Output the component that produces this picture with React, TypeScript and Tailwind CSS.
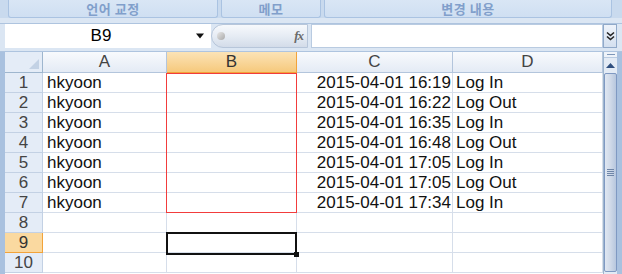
import { ReactNode } from 'react';

const rows = [
  ['hkyoon', '2015-04-01 16:19', 'Log In'],
  ['hkyoon', '2015-04-01 16:22', 'Log Out'],
  ['hkyoon', '2015-04-01 16:35', 'Log In'],
  ['hkyoon', '2015-04-01 16:48', 'Log Out'],
  ['hkyoon', '2015-04-01 17:05', 'Log In'],
  ['hkyoon', '2015-04-01 17:05', 'Log Out'],
  ['hkyoon', '2015-04-01 17:34', 'Log In'],
  ['', '', ''],
  ['', '', ''],
  ['', '', ''],
];

const groups = [
  { label: '언어 교정', w: 'w-[210px]' },
  { label: '메모', w: 'w-[100px]' },
  { label: '변경 내용', w: 'w-[288px]' },
];

function ColHead({ children, active }: { children: ReactNode; active?: boolean }) {
  return (
    <div
      className={
        active
          ? 'h-[21px] flex items-center justify-center bg-gradient-to-b from-[#fbe3b6] to-[#f6c97c] border-r border-b border-[#f2a33a] text-[#333]'
          : 'h-[21px] flex items-center justify-center bg-gradient-to-b from-[#f8fafd] to-[#e4ebf5] border-r border-b border-[#b3c5dc] text-[#444]'
      }
    >
      {children}
    </div>
  );
}

function RowHead({ n, active }: { n: number; active?: boolean }) {
  return (
    <div
      className={
        active
          ? 'h-[20px] flex items-center justify-center bg-[#fad9a0] border-r border-b border-[#f2a33a] text-[#333]'
          : 'h-[20px] flex items-center justify-center bg-[#e4ecf7] border-r border-b border-[#c3d1e4] text-[#444]'
      }
    >
      {n}
    </div>
  );
}

export default function App() {
  return (
    <div className="w-[622px] h-[274px] overflow-hidden bg-[#c9daee] flex flex-col font-['Liberation_Sans',Arial,sans-serif] text-[17px]">
      {/* ribbon group labels */}
      <div className="h-[18px] flex gap-[3px] pl-[8px] shrink-0">
        {groups.map((g) => (
          <div
            key={g.label}
            className={`${g.w} h-[18px] rounded-b-[3px] border border-t-0 border-[#aac3e2] bg-gradient-to-b from-[#d9e6f5] to-[#cfdff2] flex items-center justify-center text-[13px] font-bold text-[#819fcb] tracking-[0.5px] font-['Noto_Sans_CJK_KR',sans-serif]`}
          >
            {g.label}
          </div>
        ))}
      </div>
      <div className="h-[6px] shrink-0 bg-[#dbe6f3] border-b border-[#aec4df]" />

      {/* formula bar */}
      <div className="h-[24px] shrink-0 flex pl-[5px] pr-[5px] bg-[#dbe6f3]">
        <div className="w-[206px] bg-white flex items-center">
          <span className="flex-1 text-center pl-[1px] text-black">B9</span>
          <svg width="9" height="6" viewBox="0 0 9 6" className="mr-[6px]">
            <path d="M0 0.5h8L4 5.5z" fill="#111" />
          </svg>
        </div>
        <div className="w-[97px] rounded-l-full border border-[#b7c6da] bg-gradient-to-b from-[#f7f9fc] via-[#e6ecf4] to-[#d3dce9] flex items-center justify-between pl-[5px] pr-[4px]">
          <span className="w-[8px] h-[8px] rounded-full bg-gradient-to-br from-[#e8e8e8] to-[#a9a9a9]" />
          <span className="font-['Liberation_Serif',serif] italic font-bold text-[13px] text-[#6a6a6a] tracking-[-1px]">fx</span>
        </div>
        <div className="w-[3px] bg-[#dbe6f3]" />
        <div className="flex-1 bg-white border border-[#b9cbe1]" />
        <div className="w-[14px] border border-[#90a9c9] bg-gradient-to-b from-[#eef3fa] to-[#d4e0ef] flex items-center justify-center">
          <svg width="9" height="10" viewBox="0 0 9 10">
            <path d="M1 1.5l3.5 3 3.5-3M1 5.5l3.5 3 3.5-3" stroke="#222" strokeWidth="1.6" fill="none" />
          </svg>
        </div>
      </div>
      <div className="h-[4px] shrink-0 bg-[#dbe6f3] border-b border-[#aec4df]" />

      {/* sheet */}
      <div className="flex-1 flex pl-[5px] pr-[5px] bg-[#a9c1df]">
        <div className="relative grid grid-cols-[38px_124px_130px_156px_150px] content-start bg-white">
          <div className="h-[21px] bg-[#e4ecf7] border-r border-b border-[#9eb6ce] flex items-end justify-end pr-[3px] pb-[3px]">
            <svg width="10" height="10" viewBox="0 0 10 10">
              <path d="M10 0V10H0z" fill="#c3d2e5" />
            </svg>
          </div>
          <ColHead>A</ColHead>
          <ColHead active>B</ColHead>
          <ColHead>C</ColHead>
          <ColHead>D</ColHead>
          {rows.map((r, i) => (
            <div key={i} className="contents">
              <RowHead n={i + 1} active={i === 8} />
              <div className="h-[20px] flex items-center pl-[4px] border-r border-b border-[#d6deea] text-[#111]">{r[0]}</div>
              <div className="h-[20px] border-r border-b border-[#d6deea]" />
              <div className="h-[20px] flex items-center justify-end pr-[1px] border-r border-b border-[#d6deea] text-[#111]">{r[1]}</div>
              <div className="h-[20px] flex items-center pl-[3px] border-r border-b border-[#d6deea] text-[#111]">{r[2]}</div>
            </div>
          ))}
          {/* red box around B1:B7 */}
          <div className="absolute left-[161px] top-[21px] w-[131px] h-[140px] border border-[#f23c3c]" />
          {/* active cell B9 */}
          <div className="absolute left-[161px] top-[180px] w-[131px] h-[23px] border-2 border-[#111]">
            <div className="absolute -right-[4px] -bottom-[4px] w-[5px] h-[5px] bg-[#111]" />
          </div>
        </div>

        {/* vertical scrollbar */}
        <div className="w-[14px] flex flex-col bg-[#e3ebf5] border-l border-[#9eb6ce]">
          <div className="h-[6px] flex items-center justify-center bg-[#eef3f9] border-b border-[#b9cbe1]">
            <div className="w-[8px] h-[1px] bg-[#7d96b8]" />
          </div>
          <div className="h-[15px] flex items-center justify-center">
            <svg width="9" height="5" viewBox="0 0 9 5">
              <path d="M0 5L4.5 0 9 5z" fill="#2f4f7f" />
            </svg>
          </div>
          <div className="flex-1 mb-[2px] rounded-[2px] border border-[#7f99c2] bg-gradient-to-r from-[#dfe7f2] via-[#cfd9e8] to-[#b7c7de] flex items-center justify-center">
            <div className="flex flex-col gap-[1px]">
              <div className="w-[7px] h-[1px] bg-[#6f86a8]" />
              <div className="w-[7px] h-[1px] bg-[#6f86a8]" />
              <div className="w-[7px] h-[1px] bg-[#6f86a8]" />
              <div className="w-[7px] h-[1px] bg-[#6f86a8]" />
            </div>
          </div>
        </div>
      </div>
    </div>
  );
}
